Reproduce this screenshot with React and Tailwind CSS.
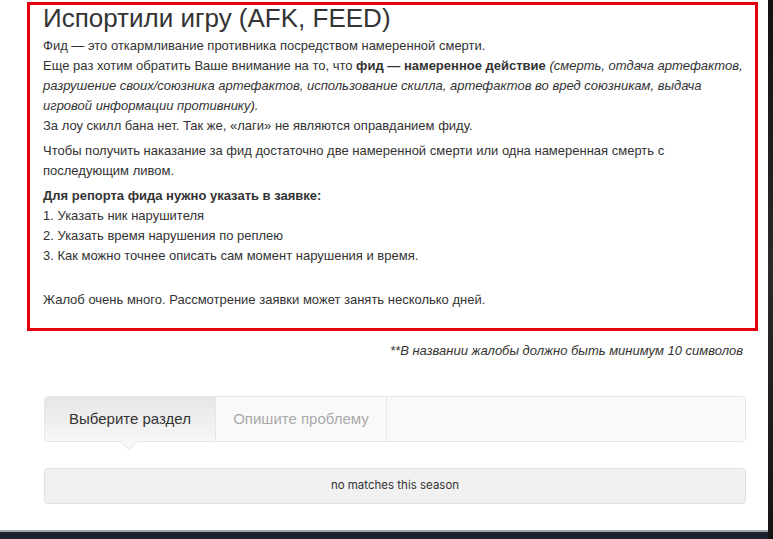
import React from 'react';

const steps = [
    "1. Указать ник нарушителя",
    "2. Указать время нарушения по реплею",
    "3. Как можно точнее описать сам момент нарушения и время.",
];

function RulesBox() {
    return (
        <div className="ml-[27px] mt-[2px] w-[731px] border-[3px] border-[#e3000f] pl-[13px] pr-[10px] pb-[18px] text-[#333] text-[13px] leading-[20px]">
            <h2 className="text-[26px] leading-[26px] font-normal">Испортили игру (AFK, FEED)</h2>
            <p className="mt-[5px]">
                Фид — это откармливание противника посредством намеренной смерти.
                <br />
                Еще раз хотим обратить Ваше внимание на то, что <b>фид — намеренное действие</b>{' '}
                <i>(смерть, отдача артефактов, разрушение своих/союзника артефактов, использование скилла, артефактов во вред союзникам, выдача игровой информации противнику).</i>
                <br />
                За лоу скилл бана нет. Так же, «лаги» не являются оправданием фиду.
            </p>
            <p className="mt-[5px]">
                Чтобы получить наказание за фид достаточно две намеренной смерти или одна намеренная смерть с последующим ливом.
            </p>
            <p className="mt-[5px] font-bold">Для репорта фида нужно указать в заявке:</p>
            {steps.map(s => (<p key={s}>{s}</p>))}
            <p className="mt-[24px]">Жалоб очень много. Рассмотрение заявки может занять несколько дней.</p>
        </div>
    );
}

function Tabs() {
    return (
        <div className="relative ml-[44px] mr-[22px] mt-[35px] h-[46px] flex border border-[#e6e6e6] rounded-[4px] bg-[#f9f9f9] text-[15px]">
            <div className="relative w-[171px] flex items-center justify-center border-r border-[#e6e6e6] bg-gradient-to-b from-[#e6e6e6] to-[#f7f7f7] text-[#333] rounded-l-[4px]">
                Выберите раздел
                {/* little pointer under the active tab */}
                <svg className="absolute left-[75px] top-full" width="18" height="9" viewBox="0 0 18 9">
                    <path d="M0 0 L9 8.5 L18 0 Z" fill="#f7f7f7" />
                    <path d="M0 0.5 L9 8.5 L18 0.5" fill="none" stroke="#e6e6e6" />
                </svg>
            </div>
            <div className="w-[171px] flex items-center justify-center border-r border-[#e6e6e6] text-[#aaa]">
                Опишите проблему
            </div>
        </div>
    );
}

export default function App() {
    return (
        <div className="w-[773px] h-[539px] flex overflow-hidden" style={{ fontFamily: '"Liberation Sans", Arial, sans-serif' }}>
            <div className="w-[768px] h-full flex flex-col bg-white">
                <RulesBox />
                <p className="mt-[10px] pr-[25px] text-right italic text-[13px] leading-[20px] text-[#333]">
                    **В названии жалобы должно быть минимум 10 символов
                </p>
                <Tabs />
                <div className="ml-[44px] mr-[22px] mt-[26px] h-[36px] flex items-center justify-center rounded-[4px] border border-[#e0e0e0] bg-[#f1f1f1] text-[11.5px] text-[#333] font-['Inter',sans-serif]">
                    no matches this season
                </div>
                <div className="mt-auto h-[2px] bg-[#9ea6b0]" />
                <div className="h-[7px] bg-[#1c222d]" />
            </div>
            <div className="w-[5px] h-full bg-gradient-to-b from-[#111] via-[#2a2a2a] to-[#141414]" />
        </div>
    );
}
